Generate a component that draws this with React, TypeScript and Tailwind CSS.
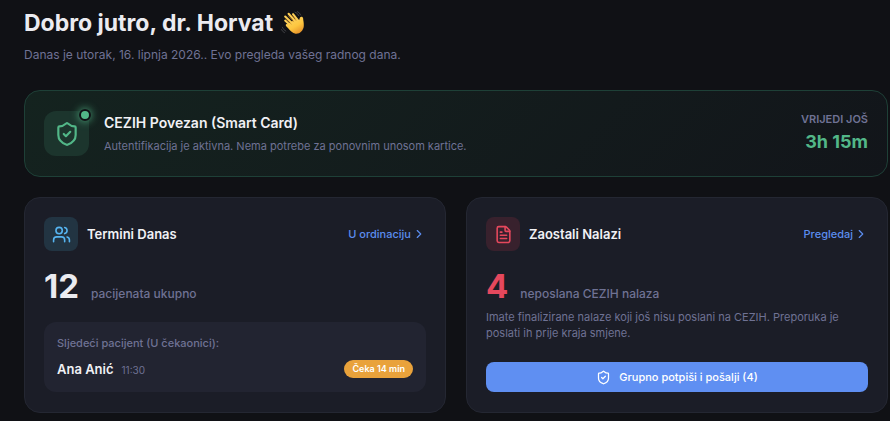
import type { ReactNode } from "react";
import { ChevronRight, FileText, ShieldCheck, Users } from "lucide-react";

type CardProps = {
  title: string;
  icon: ReactNode;
  iconClass: string;
  linkLabel: string;
  count: number;
  countClass: string;
  caption: string;
  children: ReactNode;
};

function WavingHand() {
  return (
    <svg viewBox="0 0 24 24" className="h-6 w-6 shrink-0" role="img" aria-label="Mahanje">
      <defs>
        <linearGradient id="hand" x1="0" y1="0" x2="0.6" y2="1">
          <stop offset="0" stopColor="#ffd96b" />
          <stop offset="0.65" stopColor="#fdc63f" />
          <stop offset="1" stopColor="#e9982c" />
        </linearGradient>
      </defs>
      <g stroke="#fdce55" strokeWidth="2.1" strokeLinecap="round" fill="none">
        <path d="M4.2 9.6 L11 16" />
        <path d="M4.2 5.5 L12.4 13.4" />
        <path d="M7.6 2.8 L15 11" />
        <path d="M12 3.2 L17.4 10" />
      </g>
      <path
        d="M7.4 12.6 L14.8 8 L17.6 10.2 C18.4 9.2 18.4 7.8 19 6.6 C19.8 5.1 22 5.6 22.1 7.3 C22.2 9.4 23 11.8 22.8 15 C22.4 19.8 18.6 23.1 14.6 22.7 C11.6 22.4 9.4 19.9 7.4 17.6 L5.2 15.2 C4 13.6 5.2 12.4 6.7 13.2 Z"
        fill="url(#hand)"
      />
      <path
        d="M5.6 8.4 L10.2 12.9 M7.4 5.1 L12.5 10.8 M11 4.6 L14.9 9.4"
        stroke="#b9761f"
        strokeWidth="0.6"
        strokeLinecap="round"
        fill="none"
      />
      <path
        d="M14 1.1 Q16.7 1.9 17.8 4.7 M16.3 0.5 Q18.8 1.5 19.7 4 M1.3 16.3 Q2.2 18.9 4.8 20.1 M0.5 18.6 Q1.3 20.7 3.5 21.7"
        stroke="#4a4b51"
        strokeWidth="0.8"
        strokeLinecap="round"
        fill="none"
      />
    </svg>
  );
}

function StatCard({ title, icon, iconClass, linkLabel, count, countClass, caption, children }: CardProps) {
  return (
    <section className="flex flex-col rounded-2xl border border-[#242732] bg-[#1b1d27] px-[19px] pt-[19px] pb-5">
      <div className="flex items-center justify-between">
        <div className="flex items-center gap-[9px]">
          <div className={`flex h-[34px] w-[34px] items-center justify-center rounded-lg ${iconClass}`}>{icon}</div>
          <h2 className="text-[13px] leading-5 font-semibold text-[#f1f1f5]">{title}</h2>
        </div>
        <a href="#" className="flex items-center gap-px text-[11px] font-medium text-[#5b8def]">
          {linkLabel}
          <ChevronRight size={14} strokeWidth={2} />
        </a>
      </div>

      <div className="mt-[15px] flex items-baseline gap-3">
        <span className={`text-[33px] leading-10 font-bold ${countClass}`}>{count}</span>
        <span className="text-xs font-medium text-[#6f7294]">{caption}</span>
      </div>

      {children}
    </section>
  );
}

export default function App() {
  return (
    <main className="min-h-screen bg-[#101115] pt-[7px] pr-0.5 pb-2 pl-6 font-['Inter',sans-serif] text-[#f1f1f5]">
      <header>
        <h1 className="flex items-center gap-2 text-[23px] leading-8 font-bold text-[#ebebf0]">
          Dobro jutro, dr. Horvat
          <WavingHand />
        </h1>
        <p className="mt-1.5 text-xs leading-5 text-[#6f7294]">
          Danas je utorak, 16. lipnja 2026.. Evo pregleda vašeg radnog dana.
        </p>
      </header>

      <section className="mt-[25px] flex items-center justify-between rounded-2xl border border-[#1e4037] bg-linear-135 from-[#14231f] to-[#12151a] px-[19px] py-5">
        <div className="flex items-center gap-[15px]">
          <div className="relative flex h-[45px] w-[45px] items-center justify-center rounded-xl bg-[#1c352d] text-[#52b788]">
            <ShieldCheck size={26} strokeWidth={2} />
            <span className="absolute -top-0.5 -right-0.5 h-3 w-3 rounded-full border-2 border-[#101115] bg-[#52b788] shadow-[0_0_8px_#52b788]" />
          </div>
          <div className="pt-0.5">
            <h2 className="text-sm leading-5 font-semibold">CEZIH Povezan (Smart Card)</h2>
            <p className="mt-[3px] text-[11px] leading-5 text-[#6f7294]">
              Autentifikacija je aktivna. Nema potrebe za ponovnim unosom kartice.
            </p>
          </div>
        </div>
        <div className="pb-0.5 text-right">
          <div className="text-[11px] leading-4 font-semibold text-[#6f7294] uppercase">Vrijedi još</div>
          <div className="mt-[3px] text-lg leading-6 font-bold text-[#52b788]">3h 15m</div>
        </div>
      </section>

      <div className="mt-5 grid grid-cols-2 gap-5">
        <StatCard
          title="Termini Danas"
          icon={<Users size={19} strokeWidth={2} />}
          iconClass="bg-[#223442] text-[#56b4f0]"
          linkLabel="U ordinaciju"
          count={12}
          countClass="text-[#ebebf0]"
          caption="pacijenata ukupno"
        >
          <div className="mt-4 rounded-xl bg-[#222431] px-[13px] pt-[11px] pb-[13px]">
            <p className="text-[11px] leading-5 font-medium text-[#6f7294]">Sljedeći pacijent (U čekaonici):</p>
            <div className="mt-1.5 flex items-center justify-between">
              <div className="flex items-baseline gap-2">
                <span className="text-[13px] leading-5 font-semibold">Ana Anić</span>
                <span className="text-[10px] text-[#6f7294]">11:30</span>
              </div>
              <span className="rounded-full bg-[#e9a23b] px-2 text-[9px] leading-[18px] font-semibold text-white">
                Čeka 14 min
              </span>
            </div>
          </div>
        </StatCard>

        <StatCard
          title="Zaostali Nalazi"
          icon={<FileText size={19} strokeWidth={2} />}
          iconClass="bg-[#38212d] text-[#e5485d]"
          linkLabel="Pregledaj"
          count={4}
          countClass="text-[#e5485d]"
          caption="neposlana CEZIH nalaza"
        >
          <p className="mt-[3px] text-[11px] leading-4 text-[#6f7294]">
            Imate finalizirane nalaze koji još nisu poslani na CEZIH. Preporuka je poslati ih prije kraja smjene.
          </p>
          <button
            type="button"
            className="mt-auto flex w-full items-center justify-center gap-2 rounded-lg bg-[#5f8ff2] py-1.5 text-[11px] leading-[18px] font-medium text-white"
          >
            <ShieldCheck size={15} strokeWidth={2} />
            Grupno potpiši i pošalji (4)
          </button>
        </StatCard>
      </div>
    </main>
  );
}
